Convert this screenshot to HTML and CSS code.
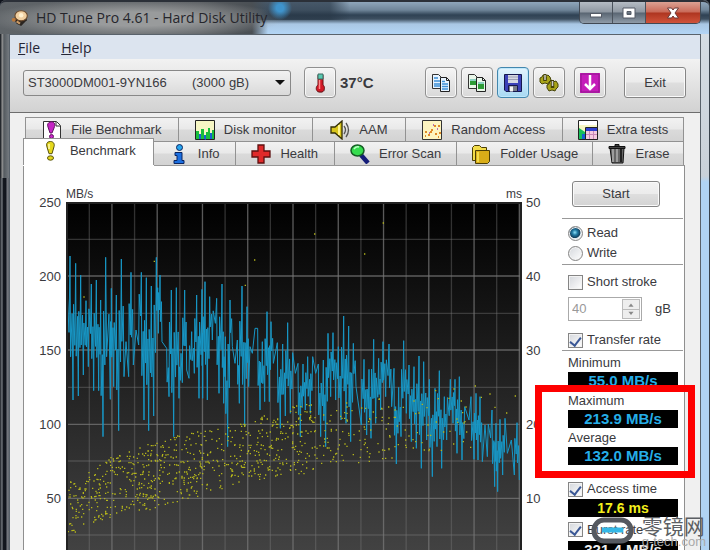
FILE: index.html
```html
<!DOCTYPE html>
<html lang="en">
<head>
<meta charset="utf-8">
<title>HD Tune Pro 4.61 - Hard Disk Utility</title>
<link rel="stylesheet" href="styles.css">
</head>
<body>
<div class="window">
  <header class="titlebar">
    <svg class="app-icon" viewBox="0 0 16 16" aria-hidden="true"><path d="M2 8l3 5 4 2 5-5V6z" fill="#2a2420"/><ellipse cx="9" cy="6" rx="5.5" ry="4.5" fill="#f0cfa0" stroke="#6b4a2c"/><circle cx="9" cy="5.500" r="2" fill="#fff0cf"/><circle cx="2.500" cy="9.500" r="1.800" fill="#b9793d"/><path d="M5 11l3 2" stroke="#c99a66" stroke-width="2"/></svg>
    <h1 class="title">HD Tune Pro 4.61 - Hard Disk Utility</h1>
    <div class="caption">
      <button class="cap" aria-label="Minimize"><svg viewBox="0 0 16 12"><rect x="2.500" y="6.500" width="11" height="3.500" fill="#fff" stroke="#555b66"/></svg></button>
      <button class="cap" aria-label="Maximize"><svg viewBox="0 0 16 12"><path d="M2 1h12v10H2zM6 4.500h4v3H6z" fill="#fff" fill-rule="evenodd" stroke="#555b66"/></svg></button>
      <button class="cap cap-close" aria-label="Close"><svg viewBox="0 0 16 12"><path d="M2.500 1h4L8 3l1.500-2h4L10 6l3.500 5h-4L8 9l-1.500 2h-4L6 6z" fill="#fff" stroke="#6b3a38"/></svg></button>
    </div>
  </header>
  <main class="client">
    <nav class="menu"><a href="#"><u>F</u>ile</a><a href="#"><u>H</u>elp</a></nav>
    <div class="toolbar">
      <div class="drive"><select class="drive-select" aria-label="Drive"><option>ST3000DM001-9YN166 &nbsp; &nbsp; &nbsp;&nbsp;(3000 gB)</option></select></div>
      <button class="tool" aria-label="Temperature"><svg viewBox="0 0 20 20"><path d="M12 12l3 2v4l-4 2-4-1z" fill="#777" opacity=".5"/><path d="M8 2h5v10c2 1 2 6-1 7H9c-4-1-3-6-1-7z" fill="#d21926" stroke="#6a1015"/><path d="M8 1h5v5H8z" fill="#59c9b0" stroke="#3a6b62"/><path d="M9.500 7v9" stroke="#ff8c8c" stroke-width="1.500"/></svg></button>
      <strong class="temp">37°C</strong>
      <div class="tools">
        <button class="tool" aria-label="Copy text"><svg viewBox="0 0 20 20"><path d="M1.500 1.500h6l3 3v11h-9z" fill="#e8f4ff" stroke="#333"/><path d="M3 5h4M3 8h6M3 11h6M3 13h6" stroke="#3c8fd6" stroke-width="1.400"/><path d="M9.500 4.500h6l3 3v11h-9z" fill="#e8f4ff" stroke="#222"/><path d="M15.500 4.500v3h3" fill="none" stroke="#222"/><path d="M11 8.500h3M11 11h6M11 13.500h6M11 16h6" stroke="#3c8fd6" stroke-width="1.400"/></svg></button>
        <button class="tool" aria-label="Copy picture"><svg viewBox="0 0 20 20"><path d="M1.500 1.500h6l3 3v11h-9z" fill="#e9f6e9" stroke="#333"/><path d="M3 6h6v6H3z" fill="#2c9b35"/><path d="M3 6h6v2H3z" fill="#8bd0c0"/><path d="M9.500 4.500h6l3 3v11h-9z" fill="#e9f6e9" stroke="#222"/><path d="M15.500 4.500v3h3" fill="none" stroke="#222"/><path d="M11 9h6v7h-6z" fill="#2c9b35"/><path d="M11 9h6v2h-6z" fill="#8bd0c0"/></svg></button>
        <button class="tool tool-on" aria-label="Save"><svg viewBox="0 0 20 20"><path d="M1.500 1.500h17v17H3l-1.500-1.500z" fill="#3b41b8" stroke="#15184e"/><path d="M5 2h10v8H5z" fill="#d5d8e2"/><path d="M5 4h10M5 6.500h10" stroke="#9ca0b5"/><path d="M5.500 12.500h9v6h-9z" fill="#777b88" stroke="#15184e"/><path d="M7 13.500h3v5H7z" fill="#f4f4f4"/></svg></button>
        <button class="tool" aria-label="Options"><svg viewBox="0 0 20 20"><g fill="#a8a419" stroke="#46440a"><path d="M1 5l2-1 1-2 3 1 2-1 2 2 1 3-2 2-1 2-3-1-3 1-2-2z"/><path d="M8 12l2-1 1-3 3 1 3-1 2 3 0 3-2 2-1 2-3-1-3 1-2-3z"/></g><path d="M6 4v4M13.500 10v5" stroke="#46440a" stroke-width="3.500"/><path d="M6 1v6M13.500 7v6" stroke="#46440a" stroke-width="3"/><path d="M6 2v5M13.500 8v5" stroke="#ccc" stroke-width="1.500"/></svg></button>
        <button class="tool tool-gap" aria-label="Minimize to tray"><svg viewBox="0 0 20 20"><path d="M0 0h20v20H0z" fill="#c51cba"/><path d="M1 1h18v18H1z" fill="none" stroke="#8e168a"/><path d="M10 2v14M5 11l5 5 5-5" fill="none" stroke="#fff" stroke-width="2.500"/></svg></button>
      </div>
      <button class="btn exit">Exit</button>
    </div>
    <section class="tabs">
      <div class="row row-back" role="tablist">
        <button class="tab w153" role="tab"><svg viewBox="0 0 20 20"><path d="M1.500 1.500h13l4 4v13h-17z" fill="#fff" stroke="#333"/><path d="M14 2v4h4" fill="none" stroke="#333"/><path d="M8 2c4-1 6 2 4 6l-2 5H8L6 7c-1-3 0-4 2-5z" fill="#c526c5" stroke="#641364"/><circle cx="9.500" cy="16.500" r="2" fill="#c526c5" stroke="#641364"/></svg>File Benchmark</button>
        <button class="tab w135" role="tab"><svg viewBox="0 0 20 20"><path d="M.5.5h19v19H.5z" fill="#f6f6c4" stroke="#222"/><path d="M1 19v-8h3v3h2V9h3v6h2v-3h2V8h2v5h2v-3h2v9z" fill="#18bf3b"/><path d="M4 19v-5h2v5zm5 0v-4h2v5zm6 0v-6h2v6z" fill="#1761d1"/></svg>Disk monitor</button>
        <button class="tab w92" role="tab"><svg viewBox="0 0 20 20"><path d="M1 7h4l7-6v18l-7-6H1z" fill="#d8c51c" stroke="#332e06" stroke-width="1.300"/><path d="M9 5v10" stroke="#fff38a" stroke-width="2"/><path d="M14 6q3 4 0 8M16 3q5 7 0 14" fill="none" stroke="#555" stroke-width="1.300"/></svg>AAM</button>
        <button class="tab w158" role="tab"><svg viewBox="0 0 20 20"><path d="M.5.5h19v19H.5z" fill="#fdf4c0" stroke="#333"/><path d="M3 12h2m1 3h2m1-5h2m2 4h2m1-8h2m-6 0h2m-6 6h2m7 1h2m-3 4h1M3 16h1" stroke="#e08a28" stroke-width="1.800"/><path d="M11 5h1m3 4h1m-9 4h1" stroke="#a040b0" stroke-width="1.500"/></svg>Random Access</button>
        <button class="tab w121" role="tab"><svg viewBox="0 0 20 20"><path d="M.5.5h19v19H.5z" fill="#f6f6c4" stroke="#222"/><path d="M1 1h18v4H1z" fill="#fff"/><path d="M1 8l6 4v7H1z" fill="#18bf5b"/><path d="M4 14h4v5H4z" fill="#1761d1"/><path d="M7.500 7.500h12v12h-12z" fill="#f4cbe0" stroke="#222"/><path d="M8 8h11v3H8z" fill="#3040d0"/><path d="M8 14.500h11M11.500 11v8M15.500 11v8" stroke="#c98ab8"/></svg>Extra tests</button>
      </div>
      <div class="row row-front" role="tablist">
        <button class="tab active w130" role="tab" aria-selected="true"><svg viewBox="0 0 20 20"><path d="M8 .7c4-1 6 2 5 5l-2 7H8L6 6c-1-3 0-5 2-5.300z" fill="#e5d81d" stroke="#55500c"/><path d="M8 3v5" stroke="#fffbb0" stroke-width="1.500"/><ellipse cx="9.500" cy="17" rx="3" ry="2.200" fill="#e5d81d" stroke="#55500c"/></svg>Benchmark</button>
        <button class="tab w82" role="tab"><svg viewBox="0 0 20 20"><circle cx="10.500" cy="3.500" r="3" fill="#27a5ee" stroke="#0b2560"/><path d="M6 8.500h7v8h2v3H5v-3h3v-5H6z" fill="#1c6fe0" stroke="#0b2560"/></svg>Info</button>
        <button class="tab w99" role="tab"><svg viewBox="0 0 20 20"><path d="M7 1h6v6h6v6h-6v6H7v-6H1V7h6z" fill="#e02a2a" stroke="#5d1010" stroke-width="1.300"/></svg>Health</button>
        <button class="tab w123" role="tab"><svg viewBox="0 0 20 20"><path d="M11 11l7 8" stroke="#141c78" stroke-width="4.500"/><ellipse cx="7.500" cy="6.500" rx="6.500" ry="5.500" fill="#35dc4e" stroke="#145c23" stroke-width="1.500"/><path d="M4 5q2-3 5-2" fill="none" stroke="#bfffc8" stroke-width="1.500"/></svg>Error Scan</button>
        <button class="tab w136" role="tab"><svg viewBox="0 0 20 20"><path d="M1.500 3.500l2-2h5l2 2h5v13h-14z" fill="#f2dc4a" stroke="#4b3e06"/><path d="M4.500 6.500h14v11l-2 2h-12z" fill="#d9ad18" stroke="#4b3e06"/><path d="M7 8v10" stroke="#f2dc4a" stroke-width="2"/></svg>Folder Usage</button>
        <button class="tab w91" role="tab"><svg viewBox="0 0 20 20"><path d="M3 4h14l-1 15H5z" fill="#666" stroke="#111"/><path d="M6 5v13M10 5v13" stroke="#aaa" stroke-width="1.600"/><path d="M14 5v13" stroke="#222" stroke-width="2"/><path d="M2 2.500h16v2H2zM8 .5h4v2H8z" fill="#444" stroke="#111"/></svg>Erase</button>
      </div>
      <div class="panel">
        <div class="plot">
          <div class="units"><span>MB/s</span><span>ms</span></div>
          <div class="axis axis-left"><span>250</span><span>200</span><span>150</span><span>100</span><span>50</span></div>
          <svg class="chart" id="chart" viewBox="198 66 1368 1044" preserveAspectRatio="none" role="img" aria-label="Transfer rate and access time">
            <defs><linearGradient id="bg" x1="0" y1="0" x2="0" y2="1"><stop offset="0" stop-color="#000"/><stop offset="1" stop-color="#424242"/></linearGradient></defs>
            <rect x="198" y="66" width="1368" height="1044" fill="url(#bg)"/>
          </svg>
          <div class="axis axis-right"><span>50</span><span>40</span><span>30</span><span>20</span><span>10</span></div>
        </div>
        <aside class="side">
          <div class="start-box"><button class="btn start">Start</button></div>
          <div class="modes">
            <label><input type="radio" name="mode" checked>Read</label>
            <label><input type="radio" name="mode">Write</label>
          </div>
          <div class="opts">
            <label><input type="checkbox">Short stroke</label>
            <div class="stroke-size">
              <span class="spin"><input id="size" type="text" value="40" disabled><span class="arrows"><svg viewBox="0 0 9 5"><path d="M3 4l1.500-2L6 4z"/></svg><svg viewBox="0 0 9 5"><path d="M3 1l1.500 2L6 1z"/></svg></span></span>
              <label for="size">gB</label>
            </div>
            <label><input type="checkbox" checked>Transfer rate</label>
          </div>
          <div class="result first"><span>Minimum</span><output>55.0 MB/s</output></div>
          <div class="marked">
            <div class="result"><span>Maximum</span><output>213.9 MB/s</output></div>
            <div class="result"><span>Average</span><output>132.0 MB/s</output></div>
          </div>
          <div class="result access"><label><input type="checkbox" checked>Access time</label><output class="yellow">17.6 ms</output></div>
          <div class="result burst"><label><input type="checkbox" checked>Burst rate</label><output class="white">321.4 MB/s</output></div>
        </aside>
      </div>
    </section>
  </main>
  <div class="watermark">
    <svg viewBox="0 0 44 27" aria-hidden="true"><rect x="3" y="3" width="37" height="21" rx="10" fill="#fff" fill-opacity=".1" stroke="#555960" stroke-width="5"/><path d="M11 13h21" stroke="#35b8e6" stroke-width="5"/></svg>
    <div><b lang="zh">零镜网</b><i>g-tech.com</i></div>
  </div>
</div>
<script src="chart.js"></script>
</body>
</html>
```
FILE: styles.css
```css
* { box-sizing: border-box; }
body {
  margin: 0;
  height: 100vh;
  overflow: hidden;
  font: 13px/16px "Liberation Sans", Arial, sans-serif;
  color: #3a3a3e;
  background: #10141c;
}
button, input, select { font: inherit; color: inherit; margin: 0; padding: 0; }
.window {
  position: relative;
  height: 100vh;
  display: flex;
  flex-direction: column;
  padding: 0 8px 0 9px;
  border-right: 1px solid #38424c;
  border-radius: 6px 6px 0 0;
  background:
    linear-gradient(90deg, #25292e 1px, #999 2px, #555b60 4px, #747a80 9px) 0 0 / 9px 178px no-repeat,
    linear-gradient(90deg, #30343a 1px, #8b9096 2px, #14181f 3px, #10141c 6px, #777b82 7px, #60656c 9px) 0 0 / 9px 100% no-repeat,
    linear-gradient(#aab4bd, #d5dde4 30px, #c9d1d9 176px, #b0d3f3 182px) right / 8px 100% no-repeat;
}
.titlebar {
  flex: none;
  height: 34px;
  margin: 0 -8px 0 -9px;
  padding: 0 8px 0 11px;
  display: flex;
  align-items: center;
  border-top: 2px solid #2b3038;
  border-radius: 6px 6px 0 0;
  background:
    radial-gradient(ellipse 150px 20px at 135px 17px, #999b9c 35%, rgba(153, 155, 156, 0) 100%),
    linear-gradient(90deg, #5f6468 0, #5a5e62 200px, #4a4f54 252px, rgba(74, 79, 84, 0) 268px),
    radial-gradient(circle 12px at 280px 6px, #3f93cb 30%, rgba(63, 147, 203, 0) 100%),
    linear-gradient(90deg, rgba(40, 55, 70, .7) 330px, rgba(40, 55, 70, 0) 350px) 0 0 / 100% 18px no-repeat,
    linear-gradient(#8fa6bb 0, #6f8599 8px, #2f4254 13px, #3d4f60 17px, #a9c7e4 22px, #b3d5f5 32px);
}
.app-icon { width: 18px; height: 18px; }
.title { margin: 0 0 0 7px; font: 14px/20px "Open Sans", sans-serif; color: #25252b; white-space: nowrap; }
.caption { align-self: flex-start; display: flex; margin-left: auto; border: 1px solid #414953; border-top: 0; border-radius: 0 0 5px 5px; overflow: hidden; }
.cap { width: 33px; height: 21px; display: grid; place-items: center; border: 0; border-right: 1px solid #4a525c; background: linear-gradient(#b5bcc4, #8e97a1 48%, #596572 52%, #8f9ba7); }
.cap svg { width: 16px; height: 12px; }
.cap-close { width: 54px; border: 0; background: linear-gradient(#dba193, #c96a58 48%, #ae3520 52%, #d0533a); }
.client { flex: 1; min-height: 0; display: flex; flex-direction: column; border: 1px solid #59626b; border-bottom: 0; background: #f0f0f0; }
.menu { flex: none; height: 24px; display: flex; gap: 21px; padding: 3px 8px; background: #dce4ef; font: 14px/20px "Open Sans", sans-serif; }
.menu a { color: #252535; text-decoration: none; }
.toolbar { flex: none; height: 54px; display: flex; align-items: center; padding: 0 14px 6px 13px; border-bottom: 1px solid #6d6d6d; background: linear-gradient(#f2f2f2, #d2d2d2); }
.drive { position: relative; flex: 0 1 268px; }
.drive::after { content: ""; position: absolute; right: 6px; top: 10px; border: 5px solid transparent; border-top: 5px solid #111; border-bottom: 0; }
.drive-select { appearance: none; width: 100%; height: 26px; padding: 0 4px; border: 1px solid #888; border-radius: 3px; background: linear-gradient(#f1f1f1, #dadada); }
.tool { flex: none; width: 32px; height: 31px; display: grid; place-items: center; border: 1px solid #909090; border-radius: 4px; background: linear-gradient(#f5f5f5, #d8d8d8); box-shadow: inset 0 0 0 1px #f7f7f7; }
.tool svg { width: 20px; height: 20px; }
.drive + .tool { margin-left: 13px; }
.tool-on { border-color: #4387ae; background: linear-gradient(#e3f4fd, #a8d9f3); box-shadow: inset 0 0 0 1px #bfe8fb; }
.temp { margin-left: 4px; font-size: 15px; }
.tools { display: flex; gap: 4px; margin-left: auto; }
.tool-gap { margin-left: 5px; }
.btn { border: 1px solid #858585; border-radius: 3px; background: linear-gradient(#f3f3f3, #ececec 48%, #dedede 52%, #d3d3d3); box-shadow: inset 0 0 0 1px #fafafa; }
.exit { width: 62px; height: 31px; margin-left: 18px; }
.tabs { flex: 1; min-height: 0; display: flex; flex-direction: column; padding: 4px 15px 0 13px; }
.row { flex: none; display: flex; height: 24px; }
.row-back { margin: 0 1px 0 2px; }
.row-front { margin-right: 1px; }
.tab { flex-basis: 0; min-width: 0; display: flex; align-items: center; justify-content: center; gap: 9px; white-space: nowrap; border: 1px solid #929292; border-width: 1px 1px 0 0; background: linear-gradient(#f2f2f2, #e9e9e9 48%, #dadada 52%, #d3d3d3); }
.row-back .tab:first-child { border-left-width: 1px; }
.tab svg { flex: none; width: 20px; height: 20px; }
.active { margin-top: -3px; padding-bottom: 2px; border-left-width: 1px; background: #fff; z-index: 1; box-shadow: 0 1px #fff; }
.w153 { flex-grow: 153; } .w135 { flex-grow: 135; } .w92 { flex-grow: 92; } .w158 { flex-grow: 158; } .w121 { flex-grow: 121; }
.w130 { flex-grow: 130; } .w82 { flex-grow: 82; } .w99 { flex-grow: 99; } .w123 { flex-grow: 123; } .w136 { flex-grow: 136; } .w91 { flex-grow: 91; }
.panel { flex: 1; min-height: 0; display: flex; gap: 20px; border: 1px solid #8f8f8f; border-top: 0; border-bottom: 0; background: #fff; box-shadow: inset 0 1px #999; }
.plot { flex: 1; display: grid; grid-template: 37px 1fr / 42px 1fr 20px; }
.units { grid-column: 2; display: flex; justify-content: space-between; align-items: flex-end; font-size: 12px; line-height: 15px; }
.axis { grid-row: 2; display: flex; flex-direction: column; gap: 58px; margin-top: -7px; }
.axis-left { grid-column: 1; text-align: right; padding-right: 5px; }
.axis-right { grid-column: 3; padding-left: 4px; }
.chart { grid-column: 2; grid-row: 2; width: 100%; height: 348px; }
.major { stroke: #777; stroke-opacity: .75; stroke-width: 4; }
.minor { stroke: #777; stroke-opacity: .4; stroke-width: 4; }
.frame { stroke: #222; stroke-width: 6; fill: none; }
.rate { fill: none; stroke: #1797c6; stroke-width: 3; stroke-linejoin: bevel; }
.seek { fill: #b4b51b; }
.side { flex: none; width: 121px; margin-right: 1px; }
.side label { display: flex; align-items: center; gap: 4px; }
.start-box { height: 54px; padding: 16px 10px 0; border-bottom: 1px solid #999; }
.start { width: 88px; height: 26px; }
.modes { height: 46px; padding: 4px 6px 0; border-bottom: 1px solid #999; }
.modes label { height: 20px; }
.opts { height: 86px; padding: 7px 6px 0; border-bottom: 1px solid #999; }
.opts label { height: 20px; }
.stroke-size { display: flex; align-items: center; gap: 13px; margin: 5px 0 9px; }
.spin { display: flex; width: 74px; height: 24px; padding: 1px; border: 1px solid #aaa; }
.spin input { width: 52px; padding: 0 2px; border: 0; background: #fff; color: #999; }
.arrows { flex: 1; display: flex; flex-direction: column; gap: 1px; background: #bbb; border: 1px solid #bbb; }
.arrows svg { flex: 1; min-height: 0; width: 100%; background: #eee; fill: #888; }
input[type=radio], input[type=checkbox] { appearance: none; flex: none; width: 15px; height: 15px; border: 1px solid #858585; background: linear-gradient(135deg, #d4d7dc, #fff); box-shadow: inset 0 0 0 1px #f3f3f3; }
input[type=radio] { border-radius: 50%; }
input[type=radio]:checked { background: radial-gradient(circle at 45% 42%, #8ee0f8 0, #217ba5 25%, #123f5d 50%, #dfe9ef 58%); }
input[type=checkbox]:checked { display: grid; place-items: center; }
input[type=checkbox]:checked::after { content: ""; width: 5px; height: 9px; border: solid #3a5795; border-width: 0 2px 2px 0; transform: rotate(38deg); }
.result { padding: 0 5px 0 6px; }
.result > span { display: block; height: 19px; line-height: 19px; }
output { display: block; height: 18px; line-height: 18px; background: #000; color: #25aee8; font-size: 15px; font-weight: bold; text-align: center; }
.first { padding-top: 2px; }
.marked { position: relative; padding-top: 1px; }
.marked::after { content: ""; position: absolute; inset: -5px -12px -13px -27px; border: 7px solid #fe0000; z-index: 2; }
.access { padding-top: 14px; }
.result label { height: 20px; }
.burst { padding-top: 1px; }
.burst label { height: 23px; }
.yellow { color: #f3ef1c; font-size: 14px; }
.white { color: #eee; }
.watermark { position: absolute; right: 3px; bottom: 2px; display: flex; align-items: flex-end; gap: 7px; z-index: 3; }
.watermark svg { width: 44px; height: 27px; margin-bottom: 4px; }
.watermark b { display: block; font: 21px/18px "Noto Sans CJK SC", sans-serif; color: #5c5f64; }
.watermark i { display: block; margin-top: 2px; font: normal 13px/12px "Liberation Sans", sans-serif; color: #aaa; }
```
FILE: chart.js
```js
const svg = document.getElementById('chart');
function add(name, attrs) {
  const el = document.createElementNS('http://www.w3.org/2000/svg', name);
  for (const key in attrs) el.setAttribute(key, attrs[key]);
  svg.appendChild(el);
}

for (let i = 0; i < 21; i++) {
  const x = 200 + i * 67.9;
  add('path', { class: i % 2 ? 'minor' : 'major', d: `M${x} 66V1110` });
}
[70, 288, 510, 733, 955].forEach(y => add('path', { class: 'major', d: `M198 ${y}H1566` }));
[178, 400, 622, 843, 1065].forEach(y => add('path', { class: 'minor', d: `M198 ${y}H1566` }));

// Transfer rate turning points: x, y
const rate = [200,610,210,228,219,660,227,250,235,648,242,285,250,585,258,362,265,560,274,312,281,632,289,300,296,632,302,360,309,770,317,232,331,658,334,325,341,620,349,345,356,752,364,237,372,590,378,485,386,590,393,277,400,555,408,450,416,495,424,277,432,720,439,293,446,752,454,318,461,708,469,232,475,460,480,285,486,485,500,505,507,650,514,330,521,770,529,323,537,655,543,520,547,608,554,330,560,570,567,595,575,455,583,580,590,345,597,655,606,328,608,655,615,305,622,660,629,350,637,480,650,355,657,640,666,312,671,670,676,470,683,800,690,360,697,500,705,550,712,480,718,670,726,318,734,740,741,380,746,620,750,500,757,520,765,445,773,445,780,690,787,485,794,665,801,395,808,665,813,425,820,550,832,488,841,745,848,492,856,708,863,428,871,700,878,518,886,580,894,550,901,770,909,552,916,690,923,530,931,700,938,530,947,580,955,552,962,770,970,540,977,800,984,460,992,650,999,458,1007,660,1015,500,1023,720,1031,408,1038,730,1046,438,1052,785,1060,490,1068,620,1084,735,1092,538,1100,765,1107,568,1113,775,1121,478,1127,730,1136,535,1142,690,1149,485,1157,650,1167,492,1175,680,1182,565,1189,852,1196,622,1203,770,1211,482,1219,700,1227,555,1234,785,1242,560,1249,805,1257,528,1264,865,1271,545,1280,780,1288,598,1297,890,1305,625,1311,800,1318,572,1325,865,1333,650,1340,780,1351,598,1359,730,1365,598,1371,820,1378,590,1386,840,1394,680,1407,720,1413,650,1422,838,1428,640,1434,840,1440,650,1447,845,1455,735,1462,830,1476,690,1484,920,1488,730,1493,935,1500,718,1508,885,1515,715,1522,820,1534,780,1543,885,1551,728,1558,900];
let d = `M${rate[0]} ${rate[1]}`;
for (let i = 2; i < rate.length; i += 2) {
  const [x0, y0, x1, y1] = rate.slice(i - 2, i + 2);
  const dx = x1 - x0, dy = y1 - y0;
  if (Math.abs(dy) > 120) {
    d += `L${x0 + dx * .2} ${y0 + dy * .7}L${x0 + dx * .7} ${y0 + dy * .4}`;
  }
  d += `L${x1} ${y1}`;
}
add('path', { class: 'rate', d });

// Access time samples: x, top of band, bottom of band, samples up to the next stop
const band = [[200,910,1070,125],[330,830,1010,150],[470,780,985,130],[600,750,945,110],[740,725,905,85],[830,690,890,75],[910,670,880,60],[1010,670,845,42],[1110,650,850,30],[1200,640,830,22],[1300,640,820,16],[1400,640,800,0]];
let seed = 7;
const random = () => (seed = seed * 16807 % 2147483647) / 2147483647;
const dot = (x, y) => { dots += `M${x.toFixed(0)} ${y.toFixed(0)}h4v4h-4z`; };
let dots = '';
for (let i = 0; i + 1 < band.length; i++) {
  const [x0, t0, b0, n] = band[i], [x1, t1, b1] = band[i + 1];
  for (let k = 0; k < n; k++) {
    const f = random(), top = t0 + (t1 - t0) * f, low = b0 + (b1 - b0) * f;
    dot(x0 + (x1 - x0) * f, top + (low - top) * random());
  }
}
[[461,242],[762,238],[734,314],[250,349],[942,160],[1148,127],[1092,220],[1424,616],[1468,640],[1483,680],[1544,646],[1518,697],[1410,800],[1442,650],[1305,630],[1360,625]].forEach(p => dot(...p));
add('path', { class: 'seek', d: dots });
add('path', { class: 'frame', d: 'M201 1110V69H1563V1110' });
```
